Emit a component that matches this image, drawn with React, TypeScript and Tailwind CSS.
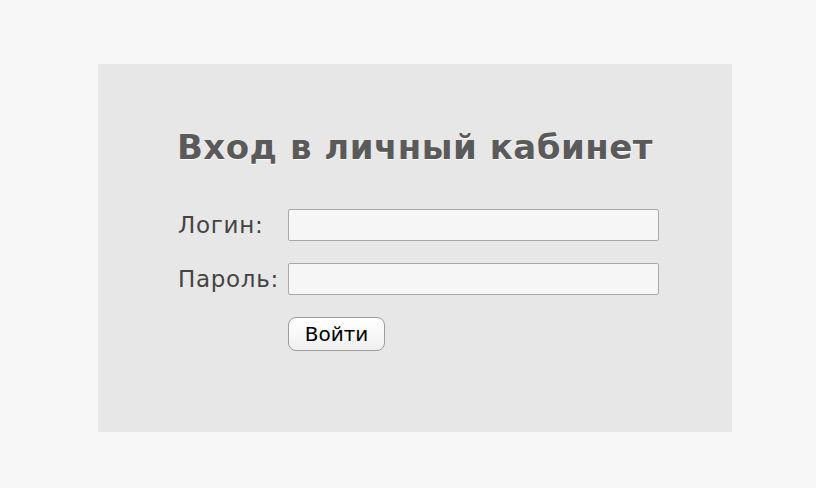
export default function App() {
  return (
    <div className="w-[816px] h-[488px] bg-[#f7f7f7] pt-[64px] pl-[98px] font-['DejaVu_Sans',sans-serif]">
      <div className="w-[634px] h-[368px] bg-[#e8e7e7] flex flex-col items-center pt-[66px]">
        <h1 className="text-[34px] leading-none font-bold text-[#5a5a5a] [text-shadow:0_1px_0_#fff] tracking-[0.5px]">
          Вход в личный кабинет
        </h1>
        <form className="mt-[45px] self-start ml-[80px] flex flex-col gap-[22px]">
          <label className="flex items-center">
            <span className="w-[110px] text-[23px] leading-[32px] tracking-[0.7px] text-[#444]">Логин:</span>
            <input className="w-[371px] h-[32px] bg-[#f6f6f6] border border-[#a9a9a9] rounded-[2px]" />
          </label>
          <label className="flex items-center">
            <span className="w-[110px] text-[23px] leading-[32px] tracking-[0.7px] text-[#444]">Пароль:</span>
            <input type="password" className="w-[371px] h-[32px] bg-[#f6f6f6] border border-[#a9a9a9] rounded-[2px]" />
          </label>
          <div className="pl-[110px] flex">
            <button type="button" className="w-[97px] h-[34px] bg-gradient-to-b from-white to-[#f0f0f0] border border-[#9d9d9d] rounded-[8px] text-[20px] leading-none text-black">
              Войти
            </button>
          </div>
        </form>
      </div>
    </div>
  );
}
